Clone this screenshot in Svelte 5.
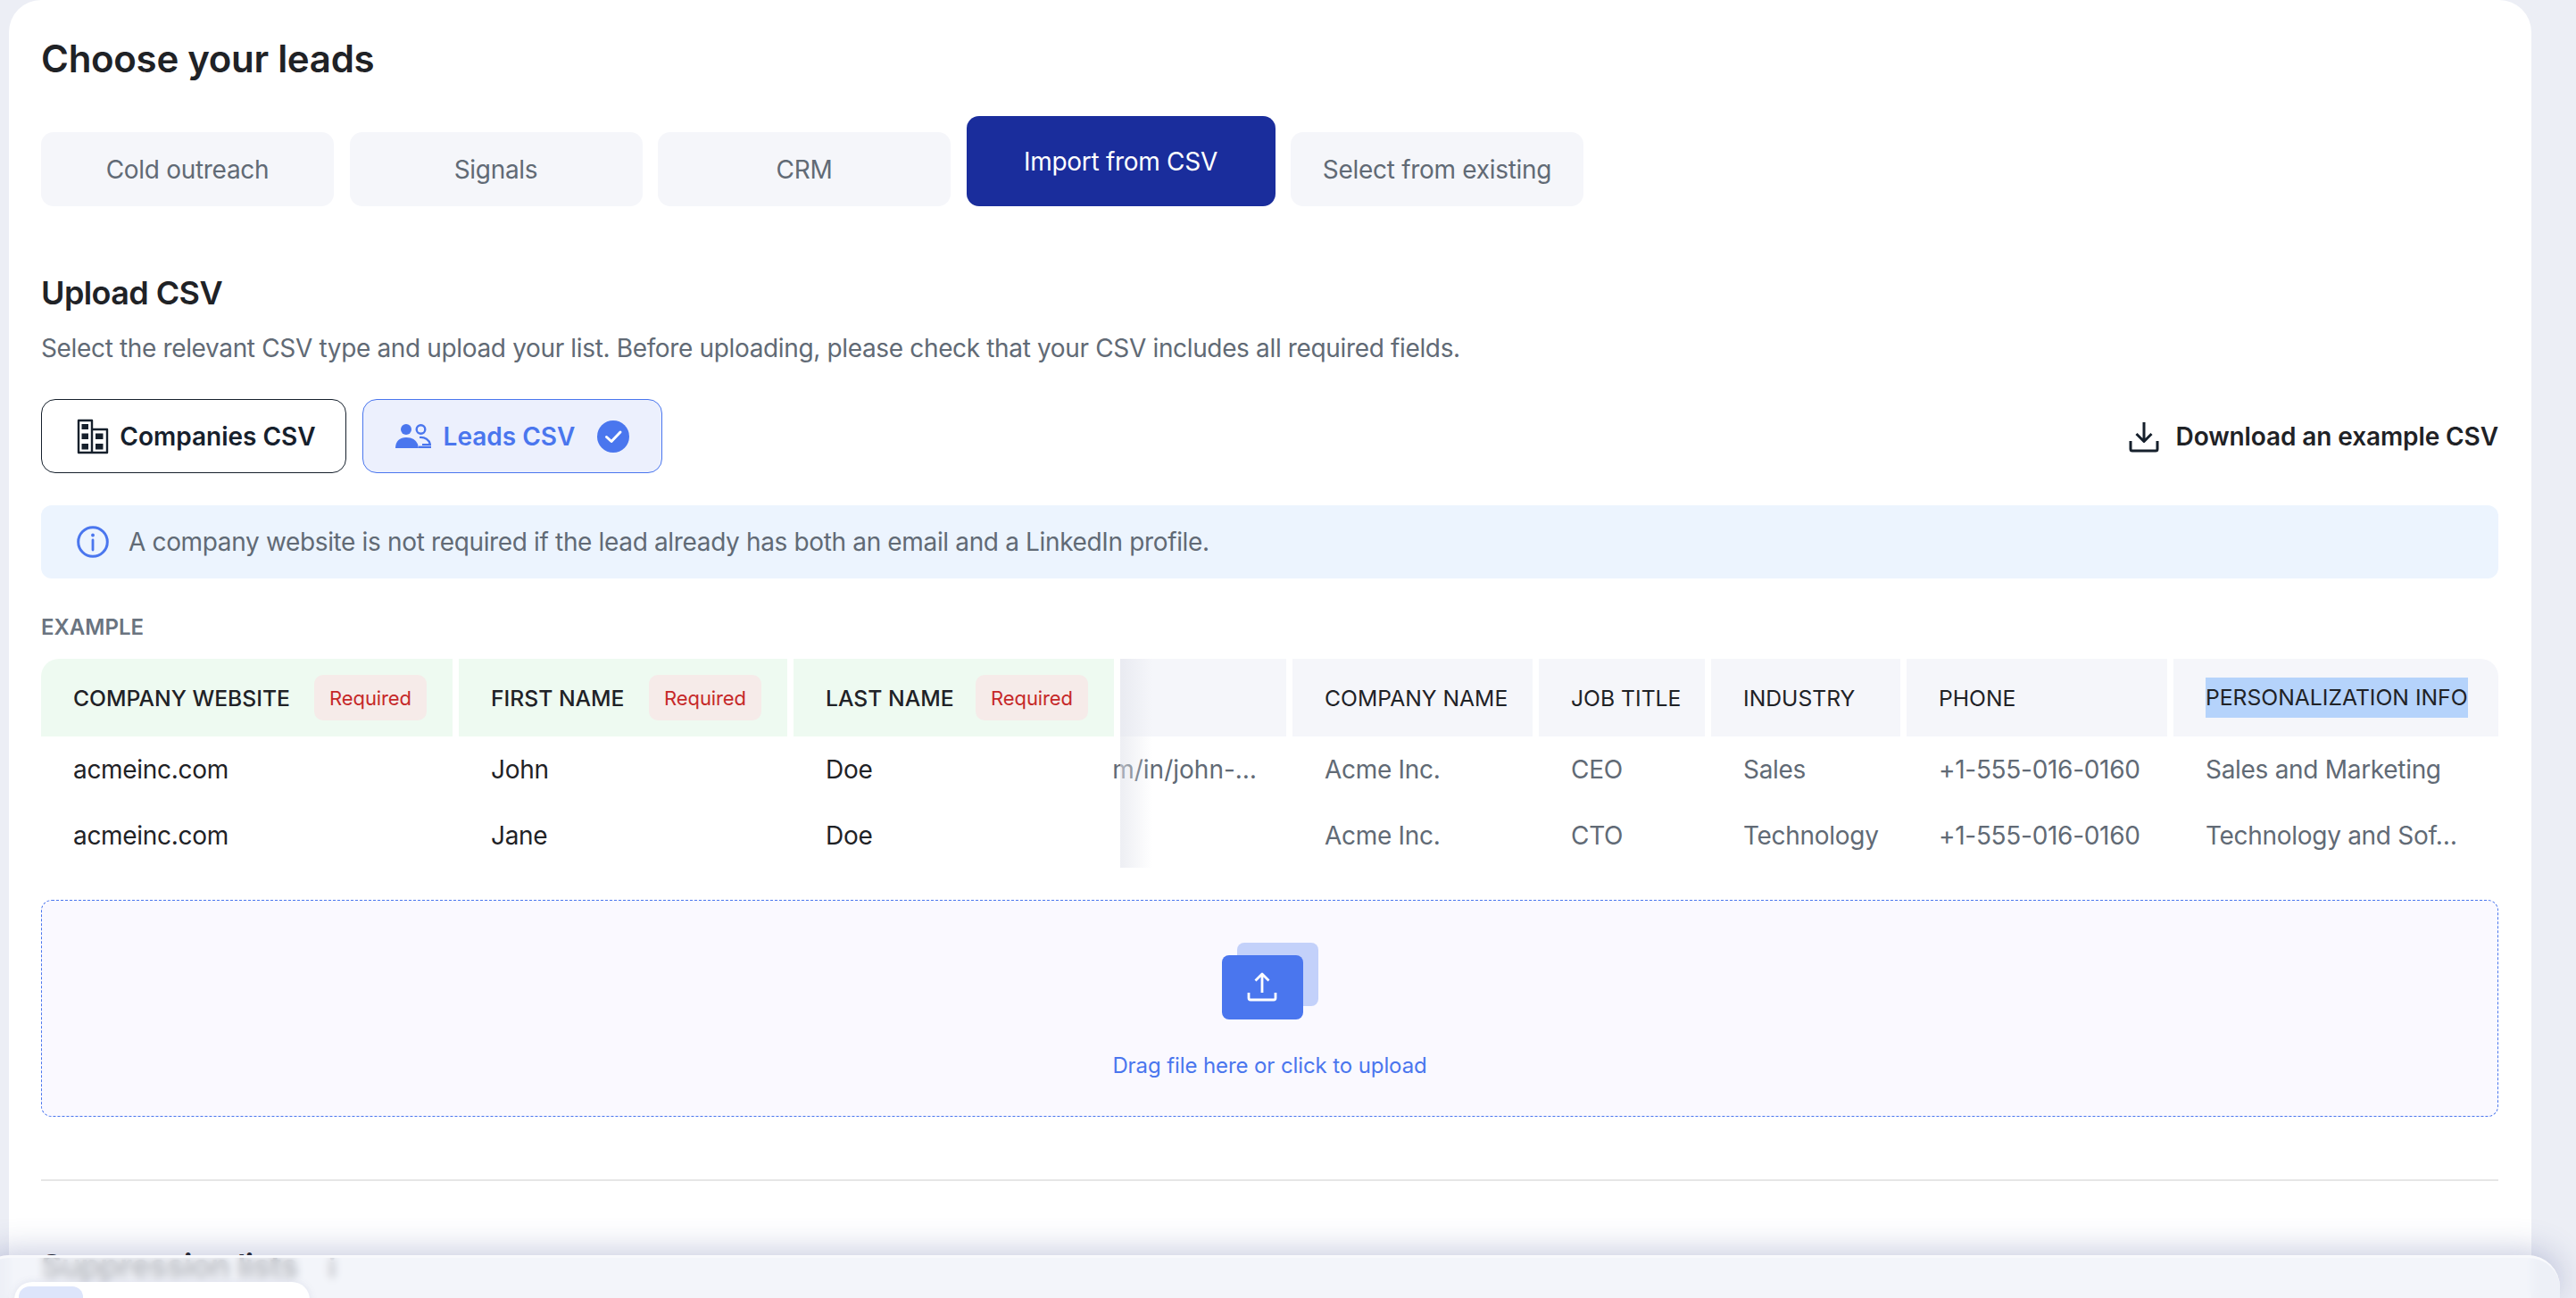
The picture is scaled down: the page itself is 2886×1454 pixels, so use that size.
<script lang="ts">
	const sources = ['Cold outreach', 'Signals', 'CRM', 'Import from CSV', 'Select from existing'];
	const activeSource = 'Import from CSV';

	const columns = [
		{ label: 'COMPANY WEBSITE', required: true },
		{ label: 'FIRST NAME', required: true },
		{ label: 'LAST NAME', required: true },
		{ label: '', required: false },
		{ label: 'COMPANY NAME', required: false },
		{ label: 'JOB TITLE', required: false },
		{ label: 'INDUSTRY', required: false },
		{ label: 'PHONE', required: false },
		{ label: 'PERSONALIZATION INFO', required: false, selected: true }
	];

	const rows = [
		['acmeinc.com', 'John', 'Doe', 'm/in/john-…', 'Acme Inc.', 'CEO', 'Sales', '+1-555-016-0160', 'Sales and Marketing'],
		['acmeinc.com', 'Jane', 'Doe', '', 'Acme Inc.', 'CTO', 'Technology', '+1-555-016-0160', 'Technology and Sof…']
	];
</script>

<div class="page">
	<main class="card">
		<h1>Choose your leads</h1>

		<div class="tabs">
			{#each sources as source}
				<button type="button" class="tab" class:active={source === activeSource}>{source}</button>
			{/each}
		</div>

		<h2>Upload CSV</h2>
		<p class="lead">Select the relevant CSV type and upload your list. Before uploading, please check that your CSV includes all required fields.</p>

		<div class="type-row">
			<button type="button" class="type-btn">
				<svg width="36" height="40" viewBox="0 0 36 40" fill="none" aria-hidden="true">
					<path d="M2 2h15v36H2zM17 12h17v26H17z" stroke="#16202c" stroke-width="2.4" stroke-linejoin="round" />
					<path d="M5.5 6h7.500v6h-7.500zM5.500 16.500h7.500v6.500h-7.500zM5.500 28h7.500v6.500h-7.500zM21 16.500h8.500v6.500h-8.500zM21 28h8.500v6.500h-8.500z" fill="#16202c" />
				</svg>
				Companies CSV
			</button>
			<button type="button" class="type-btn selected">
				<svg width="40" height="27" viewBox="0 0 40 27" aria-hidden="true">
					<circle cx="12" cy="6" r="6" fill="#4a76ee" />
					<path d="M0 27c0-8 5-12 12-12s11 3 13 7.500l1 4.500z" fill="#4a76ee" />
					<circle cx="28.500" cy="6" r="4.800" fill="none" stroke="#4a76ee" stroke-width="2.400" />
					<path d="M27 15c6-.6 11 2.500 12 8h-9" fill="none" stroke="#4a76ee" stroke-width="2.200" />
					<path d="M26 25.800h14" stroke="#4a76ee" stroke-width="2.400" />
				</svg>
				Leads CSV
				<svg class="tick" width="36" height="36" viewBox="0 0 36 36" aria-hidden="true">
					<circle cx="18" cy="18" r="18" fill="#4a76ee" />
					<path d="M10.500 18.500l5.500 5 10-10.500" fill="none" stroke="#fff" stroke-width="3" stroke-linecap="round" stroke-linejoin="round" />
				</svg>
			</button>
			<button type="button" class="download">
				<svg width="34" height="36" viewBox="0 0 34 36" fill="none" stroke="#16202c" stroke-width="3" aria-hidden="true">
					<path d="M17 2v21M8.500 15l8.500 8.500 8.500-8.500" stroke-linejoin="round" />
					<path d="M2 23v9a2 2 0 0 0 2 2h26a2 2 0 0 0 2-2v-9" />
				</svg>
				Download an example CSV
			</button>
		</div>

		<div class="info">
			<svg width="36" height="36" viewBox="0 0 36 36" fill="none" aria-hidden="true">
				<circle cx="18" cy="18" r="16.300" stroke="#4a76ee" stroke-width="3" />
				<path d="M18 16v11" stroke="#4a76ee" stroke-width="2.800" stroke-linecap="round" />
				<circle cx="18" cy="10.500" r="1.900" fill="#4a76ee" />
			</svg>
			A company website is not required if the lead already has both an email and a LinkedIn profile.
		</div>

		<div class="example-label">EXAMPLE</div>

		<div class="table">
			{#each columns as col}
				<div class="th" class:req={col.required}>
					{#if col.selected}
						<span class="picked">{col.label}</span>
					{:else}
						<span>{col.label}</span>
					{/if}
					{#if col.required}
						<span class="badge">Required</span>
					{/if}
				</div>
			{/each}
			{#each rows as row}
				{#each row as value, i}
					<div class="td" class:strong={i < 3} class:under={i === 3}>{value}</div>
				{/each}
			{/each}
			<div class="scroll-shade"></div>
		</div>

		<div class="dropzone">
			<div class="stack">
				<div class="stack-back"></div>
				<div class="stack-front">
					<svg width="34" height="34" viewBox="0 0 34 34" fill="none" stroke="#fff" stroke-width="2.800" aria-hidden="true">
						<path d="M17 2v21M9.500 9.500L17 2l7.500 7.500" stroke-linejoin="round" />
						<path d="M2 23v6a2 2 0 0 0 2 2h26a2 2 0 0 0 2-2v-6" />
					</svg>
				</div>
			</div>
			<div class="drop-text">Drag file here or click to upload</div>
		</div>

		<hr />

		<h2 class="suppression">Suppression lists <span class="hint">i</span></h2>
	</main>

	<div class="footer-bar">
		<div class="footer-card">
			<div class="footer-chip"></div>
		</div>
	</div>
</div>

<style>
	:global(body) {
		margin: 0;
		background: #eceef5;
		font-family: Inter, 'Liberation Sans', sans-serif;
		color: #1f2226;
	}

	:global(*) {
		box-sizing: border-box;
	}

	.page {
		height: 100vh;
		overflow: hidden;
		position: relative;
		padding: 0 50px 0 10px;
	}

	.card {
		background: #ffffff;
		border-radius: 36px 36px 0 0;
		padding: 40px 37px 0 36px;
		height: 1600px;
	}

	h1 {
		margin: 0;
		font-size: 42px;
		line-height: 52px;
		font-weight: 600;
		letter-spacing: -0.3px;
	}

	.tabs {
		display: flex;
		align-items: flex-end;
		gap: 17.5px;
		margin-top: 38px;
	}

	.tab {
		width: 328px;
		height: 83px;
		border: none;
		border-radius: 14px;
		background: #f5f6fa;
		color: #616a75;
		font-family: inherit;
		font-size: 28px;
		letter-spacing: -0.3px;
	}

	.tab.active {
		width: 346px;
		height: 101px;
		background: #1a2d9c;
		color: #ffffff;
	}

	h2 {
		margin: 75px 0 0;
		font-size: 36px;
		line-height: 44px;
		font-weight: 600;
		letter-spacing: -0.6px;
	}

	.lead {
		margin: 22px 0 0;
		font-size: 28px;
		line-height: 36px;
		letter-spacing: -0.35px;
		color: #616a75;
	}

	.type-row {
		display: flex;
		align-items: center;
		gap: 18px;
		margin-top: 39px;
	}

	.type-btn {
		display: flex;
		align-items: center;
		justify-content: center;
		gap: 12px;
		width: 342px;
		height: 83px;
		padding: 0 0 0 6px;
		border: 1px solid #16202c;
		border-radius: 16px;
		background: #ffffff;
		color: #16202c;
		font-family: inherit;
		font-size: 28px;
		font-weight: 600;
	}

	.type-btn.selected {
		width: 336px;
		padding: 0;
		gap: 14px;
		border-color: #4a76ee;
		background: #ecf0fd;
		color: #4a76ee;
	}

	.tick {
		margin-left: 11px;
	}

	.download {
		display: flex;
		align-items: center;
		gap: 19px;
		margin-left: auto;
		padding: 0;
		border: none;
		background: none;
		color: #1f2226;
		font-family: inherit;
		font-size: 28px;
		font-weight: 600;
		letter-spacing: -0.1px;
	}

	.info {
		display: flex;
		align-items: center;
		gap: 22px;
		height: 82px;
		margin-top: 36px;
		padding-left: 40px;
		border-radius: 12px;
		background: #ecf4fe;
		color: #616a75;
		font-size: 28px;
		letter-spacing: -0.35px;
	}

	.example-label {
		margin-top: 40px;
		font-size: 24px;
		line-height: 30px;
		font-weight: 600;
		color: #6a7480;
	}

	.table {
		position: relative;
		display: grid;
		grid-template-columns: 461px 368px 359px 186px 269px 186px 212px 292px 364px;
		grid-template-rows: 87px 74px 73px;
		column-gap: 7px;
		margin-top: 20px;
	}

	.th {
		display: flex;
		align-items: center;
		justify-content: space-between;
		padding: 0 29px 0 36px;
		background: #f5f6fa;
		font-size: 24.7px;
		white-space: nowrap;
	}

	.th:first-child {
		border-top-left-radius: 20px;
	}

	.th:nth-child(9) {
		border-top-right-radius: 20px;
	}

	.th.req {
		background: #eefaf1;
		font-weight: 500;
	}

	.picked {
		background: #b5d3fb;
		line-height: 45px;
	}

	.badge {
		display: flex;
		align-items: center;
		justify-content: center;
		width: 126px;
		height: 51px;
		border-radius: 10px;
		background: #f6ebe9;
		color: #c62828;
		font-size: 22px;
		font-weight: 400;
		letter-spacing: -0.1px;
	}

	.td {
		display: flex;
		align-items: center;
		padding-left: 36px;
		font-size: 28px;
		letter-spacing: -0.3px;
		color: #616a75;
		white-space: nowrap;
	}

	.td.strong {
		color: #1f2226;
	}

	.td.under {
		justify-content: flex-end;
		padding: 0 33px 0 0;
		letter-spacing: 0;
	}

	.scroll-shade {
		position: absolute;
		left: 1209px;
		top: 0;
		bottom: 0;
		width: 36px;
		background: linear-gradient(90deg, rgba(225, 227, 235, 0.6), rgba(225, 227, 235, 0));
		pointer-events: none;
	}

	.dropzone {
		display: flex;
		flex-direction: column;
		align-items: center;
		height: 243px;
		margin-top: 36px;
		padding-top: 47px;
		border: 1px dashed #4a76ee;
		border-radius: 12px;
		background: #faf9ff;
	}

	.stack {
		position: relative;
		width: 108px;
		height: 86px;
	}

	.stack-back {
		position: absolute;
		right: 0;
		top: 0;
		width: 91px;
		height: 71px;
		border-radius: 8px;
		background: #c3d1fa;
	}

	.stack-front {
		position: absolute;
		left: 0;
		bottom: 0;
		display: flex;
		align-items: center;
		justify-content: center;
		width: 91px;
		height: 72px;
		border-radius: 8px;
		background: #4a76ee;
	}

	.drop-text {
		margin-top: 37px;
		font-size: 24px;
		line-height: 30px;
		letter-spacing: -0.1px;
		color: #4a76ee;
	}

	hr {
		height: 2px;
		margin: 70px 0 0;
		border: none;
		background: #e6e6e6;
	}

	.suppression {
		margin-top: 73px;
	}

	.hint {
		display: inline-block;
		width: 14px;
		margin-left: 26px;
		font-size: 30px;
	}

	.footer-bar {
		position: absolute;
		left: -26px;
		right: 18px;
		bottom: 0;
		height: 48px;
		padding: 27px 0 0 42px;
		border-top: 3px solid #f8f9fc;
		border-radius: 36px 36px 0 0;
		background: rgba(238, 241, 248, 0.7);
		backdrop-filter: blur(5px);
		box-shadow: 0 -4px 36px rgba(70, 85, 150, 0.32);
	}

	.footer-card {
		width: 331px;
		height: 40px;
		padding: 5px;
		border-radius: 20px 20px 0 0;
		background: #ffffff;
		box-shadow: 0 0 10px rgba(70, 85, 150, 0.12);
	}

	.footer-chip {
		width: 72px;
		height: 40px;
		border-radius: 12px 12px 0 0;
		background: #dde5fb;
	}
</style>
